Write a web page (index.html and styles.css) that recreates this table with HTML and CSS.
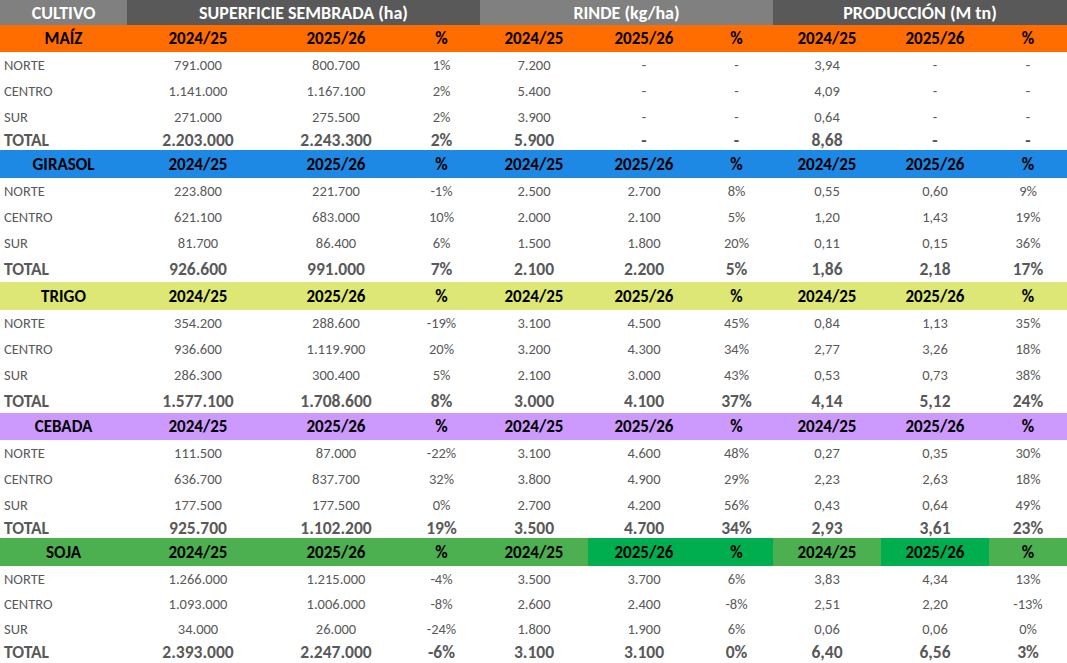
FILE: index.html
```html
<!DOCTYPE html>
<html lang="es">
<head>
<meta charset="utf-8">
<title>Cultivos</title>
<link rel="stylesheet" href="styles.css">
</head>
<body>
<div class="sheet">
  <div class="row top h25">
    <div class="c g">CULTIVO</div>
    <div class="c d span3">SUPERFICIE SEMBRADA (ha)</div>
    <div class="c g span3">RINDE (kg/ha)</div>
    <div class="c d span3">PRODUCCIÓN (M tn)</div>
  </div>

  <div class="row crop maiz h27">
    <div class="c">MAÍZ</div><div class="c">2024/25</div><div class="c">2025/26</div><div class="c">%</div><div class="c">2024/25</div><div class="c">2025/26</div><div class="c">%</div><div class="c">2024/25</div><div class="c">2025/26</div><div class="c">%</div>
  </div>
  <div class="row data h26"><div class="l">NORTE</div><div class="c">791.000</div><div class="c">800.700</div><div class="c">1%</div><div class="c">7.200</div><div class="c">-</div><div class="c">-</div><div class="c">3,94</div><div class="c">-</div><div class="c">-</div></div>
  <div class="row data h26"><div class="l">CENTRO</div><div class="c">1.141.000</div><div class="c">1.167.100</div><div class="c">2%</div><div class="c">5.400</div><div class="c">-</div><div class="c">-</div><div class="c">4,09</div><div class="c">-</div><div class="c">-</div></div>
  <div class="row data h25"><div class="l">SUR</div><div class="c">271.000</div><div class="c">275.500</div><div class="c">2%</div><div class="c">3.900</div><div class="c">-</div><div class="c">-</div><div class="c">0,64</div><div class="c">-</div><div class="c">-</div></div>
  <div class="row total h21"><div class="l">TOTAL</div><div class="c">2.203.000</div><div class="c">2.243.300</div><div class="c">2%</div><div class="c">5.900</div><div class="c">-</div><div class="c">-</div><div class="c">8,68</div><div class="c">-</div><div class="c">-</div></div>

  <div class="row crop girasol h28">
    <div class="c">GIRASOL</div><div class="c">2024/25</div><div class="c">2025/26</div><div class="c">%</div><div class="c">2024/25</div><div class="c">2025/26</div><div class="c">%</div><div class="c">2024/25</div><div class="c">2025/26</div><div class="c">%</div>
  </div>
  <div class="row data h26"><div class="l">NORTE</div><div class="c">223.800</div><div class="c">221.700</div><div class="c">-1%</div><div class="c">2.500</div><div class="c">2.700</div><div class="c">8%</div><div class="c">0,55</div><div class="c">0,60</div><div class="c">9%</div></div>
  <div class="row data h26"><div class="l">CENTRO</div><div class="c">621.100</div><div class="c">683.000</div><div class="c">10%</div><div class="c">2.000</div><div class="c">2.100</div><div class="c">5%</div><div class="c">1,20</div><div class="c">1,43</div><div class="c">19%</div></div>
  <div class="row data h26"><div class="l">SUR</div><div class="c">81.700</div><div class="c">86.400</div><div class="c">6%</div><div class="c">1.500</div><div class="c">1.800</div><div class="c">20%</div><div class="c">0,11</div><div class="c">0,15</div><div class="c">36%</div></div>
  <div class="row total h26"><div class="l">TOTAL</div><div class="c">926.600</div><div class="c">991.000</div><div class="c">7%</div><div class="c">2.100</div><div class="c">2.200</div><div class="c">5%</div><div class="c">1,86</div><div class="c">2,18</div><div class="c">17%</div></div>

  <div class="row crop trigo h28">
    <div class="c">TRIGO</div><div class="c">2024/25</div><div class="c">2025/26</div><div class="c">%</div><div class="c">2024/25</div><div class="c">2025/26</div><div class="c">%</div><div class="c">2024/25</div><div class="c">2025/26</div><div class="c">%</div>
  </div>
  <div class="row data h26"><div class="l">NORTE</div><div class="c">354.200</div><div class="c">288.600</div><div class="c">-19%</div><div class="c">3.100</div><div class="c">4.500</div><div class="c">45%</div><div class="c">0,84</div><div class="c">1,13</div><div class="c">35%</div></div>
  <div class="row data h26"><div class="l">CENTRO</div><div class="c">936.600</div><div class="c">1.119.900</div><div class="c">20%</div><div class="c">3.200</div><div class="c">4.300</div><div class="c">34%</div><div class="c">2,77</div><div class="c">3,26</div><div class="c">18%</div></div>
  <div class="row data h26"><div class="l">SUR</div><div class="c">286.300</div><div class="c">300.400</div><div class="c">5%</div><div class="c">2.100</div><div class="c">3.000</div><div class="c">43%</div><div class="c">0,53</div><div class="c">0,73</div><div class="c">38%</div></div>
  <div class="row total h25"><div class="l">TOTAL</div><div class="c">1.577.100</div><div class="c">1.708.600</div><div class="c">8%</div><div class="c">3.000</div><div class="c">4.100</div><div class="c">37%</div><div class="c">4,14</div><div class="c">5,12</div><div class="c">24%</div></div>

  <div class="row crop cebada h27">
    <div class="c">CEBADA</div><div class="c">2024/25</div><div class="c">2025/26</div><div class="c">%</div><div class="c">2024/25</div><div class="c">2025/26</div><div class="c">%</div><div class="c">2024/25</div><div class="c">2025/26</div><div class="c">%</div>
  </div>
  <div class="row data h26"><div class="l">NORTE</div><div class="c">111.500</div><div class="c">87.000</div><div class="c">-22%</div><div class="c">3.100</div><div class="c">4.600</div><div class="c">48%</div><div class="c">0,27</div><div class="c">0,35</div><div class="c">30%</div></div>
  <div class="row data h26"><div class="l">CENTRO</div><div class="c">636.700</div><div class="c">837.700</div><div class="c">32%</div><div class="c">3.800</div><div class="c">4.900</div><div class="c">29%</div><div class="c">2,23</div><div class="c">2,63</div><div class="c">18%</div></div>
  <div class="row data h25"><div class="l">SUR</div><div class="c">177.500</div><div class="c">177.500</div><div class="c">0%</div><div class="c">2.700</div><div class="c">4.200</div><div class="c">56%</div><div class="c">0,43</div><div class="c">0,64</div><div class="c">49%</div></div>
  <div class="row total h21"><div class="l">TOTAL</div><div class="c">925.700</div><div class="c">1.102.200</div><div class="c">19%</div><div class="c">3.500</div><div class="c">4.700</div><div class="c">34%</div><div class="c">2,93</div><div class="c">3,61</div><div class="c">23%</div></div>

  <div class="row crop soja h28">
    <div class="c">SOJA</div><div class="c">2024/25</div><div class="c">2025/26</div><div class="c">%</div><div class="c">2024/25</div><div class="c dk">2025/26</div><div class="c dk">%</div><div class="c">2024/25</div><div class="c dk">2025/26</div><div class="c">%</div>
  </div>
  <div class="row data h25"><div class="l">NORTE</div><div class="c">1.266.000</div><div class="c">1.215.000</div><div class="c">-4%</div><div class="c">3.500</div><div class="c">3.700</div><div class="c">6%</div><div class="c">3,83</div><div class="c">4,34</div><div class="c">13%</div></div>
  <div class="row data h25"><div class="l">CENTRO</div><div class="c">1.093.000</div><div class="c">1.006.000</div><div class="c">-8%</div><div class="c">2.600</div><div class="c">2.400</div><div class="c">-8%</div><div class="c">2,51</div><div class="c">2,20</div><div class="c">-13%</div></div>
  <div class="row data h25"><div class="l">SUR</div><div class="c">34.000</div><div class="c">26.000</div><div class="c">-24%</div><div class="c">1.800</div><div class="c">1.900</div><div class="c">6%</div><div class="c">0,06</div><div class="c">0,06</div><div class="c">0%</div></div>
  <div class="row total h22"><div class="l">TOTAL</div><div class="c">2.393.000</div><div class="c">2.247.000</div><div class="c">-6%</div><div class="c">3.100</div><div class="c">3.100</div><div class="c">0%</div><div class="c">6,40</div><div class="c">6,56</div><div class="c">3%</div></div>
</div>
</body>
</html>
```

FILE: styles.css
```css
* { box-sizing: border-box; }
html, body { margin: 0; padding: 0; background: #ffffff; }
body {
  font-family: Carlito, Lato, "Liberation Sans", sans-serif;
  width: 1067px;
  height: 663px;
  overflow: hidden;
}
.sheet { display: flex; flex-direction: column; width: 1067px; }
.row {
  display: grid;
  grid-template-columns: 127px 142px 134px 77px 108px 112px 73px 108px 108px 78px;
  align-items: stretch;
}
.row > div { display: flex; align-items: center; white-space: nowrap; }
.c { justify-content: center; }
.l { justify-content: flex-start; padding-left: 4px; }
.span3 { grid-column: span 3; }

.h21 { height: 21px; }
.h22 { height: 22px; }
.h25 { height: 25px; }
.h26 { height: 26px; }
.h27 { height: 27px; }
.h28 { height: 28px; }

.top > div { color: #ffffff; font-weight: 700; font-size: 18px; }
.top .g { background: #808080; }
.top .d { background: #595959; }

.crop { color: #000000; font-weight: 700; font-size: 17px; }
.maiz { background: #ff6d00; }
.girasol { background: #1e88e5; }
.trigo { background: #dce775; }
.cebada { background: #cc99fc; }
.soja { background: #4caf50; }
.soja .dk { background: #00ad4f; }

.data { color: #595959; font-size: 14.5px; }
.total { color: #595959; font-weight: 700; font-size: 17.5px; }
```
